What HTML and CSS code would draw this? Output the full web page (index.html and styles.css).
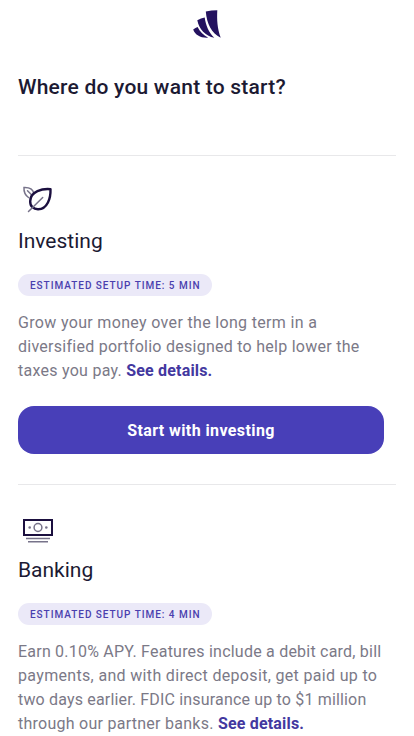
FILE: index.html
```html
<!DOCTYPE html>
<html lang="en">
<head>
    <meta charset="UTF-8">
    <meta name="viewport" content="width=device-width, initial-scale=1.0">
    <title>Where do you want to start?</title>
    <link rel="stylesheet" href="styles.css">
</head>
<body>
    <header class="header">
        <svg class="logo" width="28" height="28" viewBox="0 0 28 28" fill="#24125f">
            <path d="M12.800 1.500Q18.500 .3 24.300 .2C23.800 10 24.300 18 27.700 27.800C18.500 23 13.800 14 12.800 1.500Z"/>
            <path d="M4.300 10.200Q8 8.300 11.700 7.500C12.800 15.500 15.800 22.500 21.300 27.800C12.500 26 6 19 4.300 10.200Z"/>
            <path d="M.2 19.600Q2.500 17.700 4.600 17.100C6.800 21.500 10.200 25 15.200 27.700C8 28.200 2.200 25.500 .2 19.600Z"/>
        </svg>
    </header>

    <main class="container">
        <h1>Where do you want to start?</h1>

        <section class="option">
            <svg class="icon" width="40" height="40" viewBox="0 0 40 40" fill="none" stroke-linecap="round">
                <path d="M10.500 20.500C7 18 5.700 14.500 6 10.500C10.500 10.300 14.800 12 15.700 16M9.500 13.800L13 17.200" stroke="#77738a" stroke-width="1.500"/>
                <path d="M32.500 12.200C24.500 11.500 12.500 14 12.200 24.200C12 29.500 15.500 32.300 20.200 32.200C29.500 32 32.800 21 32.500 12.200Z" stroke="#1b0f3f" stroke-width="2.400" stroke-linejoin="round"/>
                <path d="M10.500 34.500L24.700 20.500" stroke="#77738a" stroke-width="1.500"/>
            </svg>
            <h2>Investing</h2>
            <span class="badge">Estimated setup time: 5 min</span>
            <p>
                <span class="loose">Grow your money over the long term in a</span><br>
                diversified portfolio designed to help lower the<br>
                taxes you pay. <a href="#">See details.</a>
            </p>
            <button type="button">Start with investing</button>
        </section>

        <section class="option last">
            <svg class="icon" width="40" height="40" viewBox="0 0 40 40" fill="none">
                <rect x="6" y="14" width="28" height="15" stroke="#1b0f3f" stroke-width="2"/>
                <circle cx="20" cy="21.500" r="3.900" stroke="#77738a" stroke-width="1.500"/>
                <circle cx="11.700" cy="21.500" r="1.300" fill="#77738a"/>
                <circle cx="28.300" cy="21.500" r="1.300" fill="#77738a"/>
                <path d="M8 32.500H32M10 35.700H30" stroke="#77738a" stroke-width="1.400"/>
            </svg>
            <h2>Banking</h2>
            <span class="badge">Estimated setup time: 4 min</span>
            <p>
                <span class="tight">Earn 0.10% APY. Features include a debit card, bill</span><br>
                <span class="loose">payments, and with direct deposit, get paid up to</span><br>
                <span class="tighter">two days earlier. FDIC insurance up to $1 million</span><br>
                through our partner banks. <a href="#">See details.</a>
            </p>
        </section>
    </main>
</body>
</html>
```
FILE: styles.css
```css
* {
    box-sizing: border-box;
}
body {
    margin: 0;
    background-color: #fff;
    font-family: Roboto, "Liberation Sans", sans-serif;
    color: #1c1a33;
}
.header {
    display: flex;
    justify-content: center;
    padding-top: 10px;
    height: 71px;
}
.logo {
    display: block;
}
.container {
    padding: 0 18px;
}
h1 {
    margin: 0;
    height: 84px;
    font-size: 21px;
    line-height: 32px;
    font-weight: 500;
    letter-spacing: 0.22px;
    white-space: nowrap;
}
.option {
    border-top: 1px solid #e8e8ea;
    height: 329px;
    padding-top: 21px;
}
.option.last {
    height: auto;
}
.icon {
    display: block;
}
h2 {
    margin: 9px 0 18px;
    font-size: 21px;
    line-height: 30px;
    font-weight: 400;
}
.badge {
    display: flex;
    align-items: center;
    width: 194px;
    height: 22px;
    padding-left: 12px;
    border-radius: 11px;
    background-color: #ebe9f8;
    color: #4a3fae;
    font-size: 10px;
    font-weight: 500;
    letter-spacing: 0.96px;
    text-transform: uppercase;
    white-space: nowrap;
}
p {
    margin: 15px 0 23px;
    font-size: 16px;
    line-height: 24px;
    letter-spacing: 0.26px;
    color: #7b7987;
    white-space: nowrap;
}
.last p {
    margin-bottom: 0;
}
.loose {
    letter-spacing: 0.33px;
}
.tight {
    letter-spacing: 0.22px;
}
.tighter {
    letter-spacing: 0.17px;
}
a {
    color: #43389f;
    font-weight: 700;
    letter-spacing: 0.18px;
    text-decoration: none;
}
button {
    display: block;
    width: 366px;
    height: 48px;
    border: none;
    border-radius: 16px;
    background-color: #483fb8;
    color: #fff;
    font-family: inherit;
    font-size: 16px;
    font-weight: 700;
    letter-spacing: 0.4px;
    cursor: pointer;
}
```
